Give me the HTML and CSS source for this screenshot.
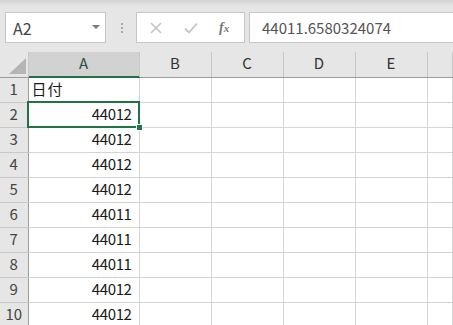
FILE: index.html
```html
<!DOCTYPE html>
<html lang="ja">
<head>
  <meta charset="UTF-8">
  <title>Sheet</title>
  <link rel="stylesheet" href="styles.css">
</head>
<body>
  <div class="toolbar">
    <div class="name-box">
      <span>A2</span>
      <svg class="caret" width="8" height="4" viewBox="0 0 8 4"><path d="M0 0h8L4 4z" fill="#7a7a7a"/></svg>
    </div>
    <div class="grip"><i></i><i></i><i></i></div>
    <div class="fx-buttons">
      <svg width="12" height="12" viewBox="0 0 12 12"><path d="M1 1l10 10M11 1L1 11" stroke="#c3c3c3" stroke-width="1.6" fill="none"/></svg>
      <svg width="14" height="12" viewBox="0 0 14 12"><path d="M1 6.5l4 4L13 1.5" stroke="#c3c3c3" stroke-width="1.8" fill="none"/></svg>
      <span class="fx">f<sub>x</sub></span>
    </div>
    <div class="formula">44011.6580324074</div>
  </div>

  <table class="sheet">
    <colgroup>
      <col class="c-head"><col class="c-a"><col class="c-std"><col class="c-std"><col class="c-std"><col class="c-std"><col>
    </colgroup>
    <thead>
      <tr>
        <th class="corner"><svg width="17" height="16" viewBox="0 0 17 16"><path d="M17 0V16H0z" fill="#b5b5b5"/></svg></th>
        <th class="sel-col">A</th><th>B</th><th>C</th><th>D</th><th>E</th><th></th>
      </tr>
    </thead>
    <tbody>
      <tr><th>1</th><td class="txt">日付</td><td></td><td></td><td></td><td></td><td></td></tr>
      <tr><th>2</th><td class="num active">44012<span class="handle"></span></td><td></td><td></td><td></td><td></td><td></td></tr>
      <tr><th>3</th><td class="num">44012</td><td></td><td></td><td></td><td></td><td></td></tr>
      <tr><th>4</th><td class="num">44012</td><td></td><td></td><td></td><td></td><td></td></tr>
      <tr><th>5</th><td class="num">44012</td><td></td><td></td><td></td><td></td><td></td></tr>
      <tr><th>6</th><td class="num">44011</td><td></td><td></td><td></td><td></td><td></td></tr>
      <tr><th>7</th><td class="num">44011</td><td></td><td></td><td></td><td></td><td></td></tr>
      <tr><th>8</th><td class="num">44011</td><td></td><td></td><td></td><td></td><td></td></tr>
      <tr><th>9</th><td class="num">44012</td><td></td><td></td><td></td><td></td><td></td></tr>
      <tr><th>10</th><td class="num">44012</td><td></td><td></td><td></td><td></td><td></td></tr>
    </tbody>
  </table>
</body>
</html>
```

FILE: styles.css
```css
body {
  margin: 0;
  font-family: "Noto Sans CJK JP", "Noto Sans", sans-serif;
  background-color: #fff;
  overflow: hidden;
}
.toolbar {
  display: flex;
  align-items: center;
  height: 52px;
  padding-left: 5px;
  background: linear-gradient(#d2d2d2, #e6e6e6 6px);
}
.name-box {
  display: flex;
  align-items: center;
  justify-content: space-between;
  box-sizing: border-box;
  width: 101px;
  height: 31px;
  margin-top: 3px;
  padding: 0 5px 0 7px;
  background-color: #fff;
  border: 1px solid #c6c6c6;
  color: #444;
  font-size: 16px;
}
.caret {
  margin-bottom: 2px;
}
.grip {
  display: flex;
  flex-direction: column;
  gap: 2px;
  margin: 3px 13px 0 15px;
}
.grip i {
  width: 2px;
  height: 2px;
  background-color: #a8a8a8;
}
.fx-buttons {
  display: flex;
  align-items: center;
  box-sizing: border-box;
  width: 109px;
  height: 31px;
  margin-top: 3px;
  padding-left: 13px;
  gap: 22px;
  background-color: #fff;
  border: 1px solid #c6c6c6;
}
.fx {
  font-family: "Liberation Serif", serif;
  font-style: italic;
  font-weight: bold;
  font-size: 14px;
  color: #777;
  margin-left: -1px;
}
.fx sub {
  font-size: 11px;
  vertical-align: 0;
}
.formula {
  flex: 1;
  box-sizing: border-box;
  height: 31px;
  margin-top: 3px;
  margin-left: 4px;
  padding: 4px 0 0 12px;
  background-color: #fff;
  border: 1px solid #c6c6c6;
  border-right: none;
  color: #555;
  font-size: 15px;
}
.sheet {
  border-collapse: collapse;
  table-layout: fixed;
  width: 100%;
}
.c-head { width: 28px; }
.c-a { width: 111px; }
.c-std { width: 72px; }
.sheet tr {
  height: 25px;
}
th, td {
  padding: 0 0 2px;
  font-size: 15px;
  line-height: 18px;
  font-weight: normal;
  color: #1a1a1a;
  border-right: 1px solid #d4d4d4;
  border-bottom: 1px solid #d4d4d4;
}
thead th {
  background-color: #e6e6e6;
  border-right-color: #c8c8c8;
  border-bottom: 1px solid #9b9b9b;
  color: #333;
  text-align: center;
}
thead th.sel-col {
  background-color: #d2d2d2;
  border-bottom-color: #217346;
  box-shadow: inset 0 -1px 0 #217346;
  color: #24503a;
}
thead th.corner {
  text-align: right;
  vertical-align: bottom;
  padding: 0 2px 3px 0;
}
thead th.corner svg {
  display: block;
  margin-left: auto;
}
tbody th {
  background-color: #e6e6e6;
  border-right: 1px solid #9b9b9b;
  border-bottom-color: #c8c8c8;
  color: #444;
  text-align: center;
}
.num {
  text-align: right;
  padding-right: 7px;
  letter-spacing: -0.4px;
}
.txt {
  padding-left: 3px;
  letter-spacing: 1px;
}
.active {
  position: relative;
}
.active::after {
  content: "";
  position: absolute;
  left: -2px;
  top: -2px;
  right: -1px;
  bottom: -1px;
  border: 2px solid #217346;
}
.handle {
  position: absolute;
  right: -4px;
  bottom: -4px;
  width: 5px;
  height: 5px;
  background-color: #217346;
  border: 1px solid #fff;
  z-index: 1;
}
```
